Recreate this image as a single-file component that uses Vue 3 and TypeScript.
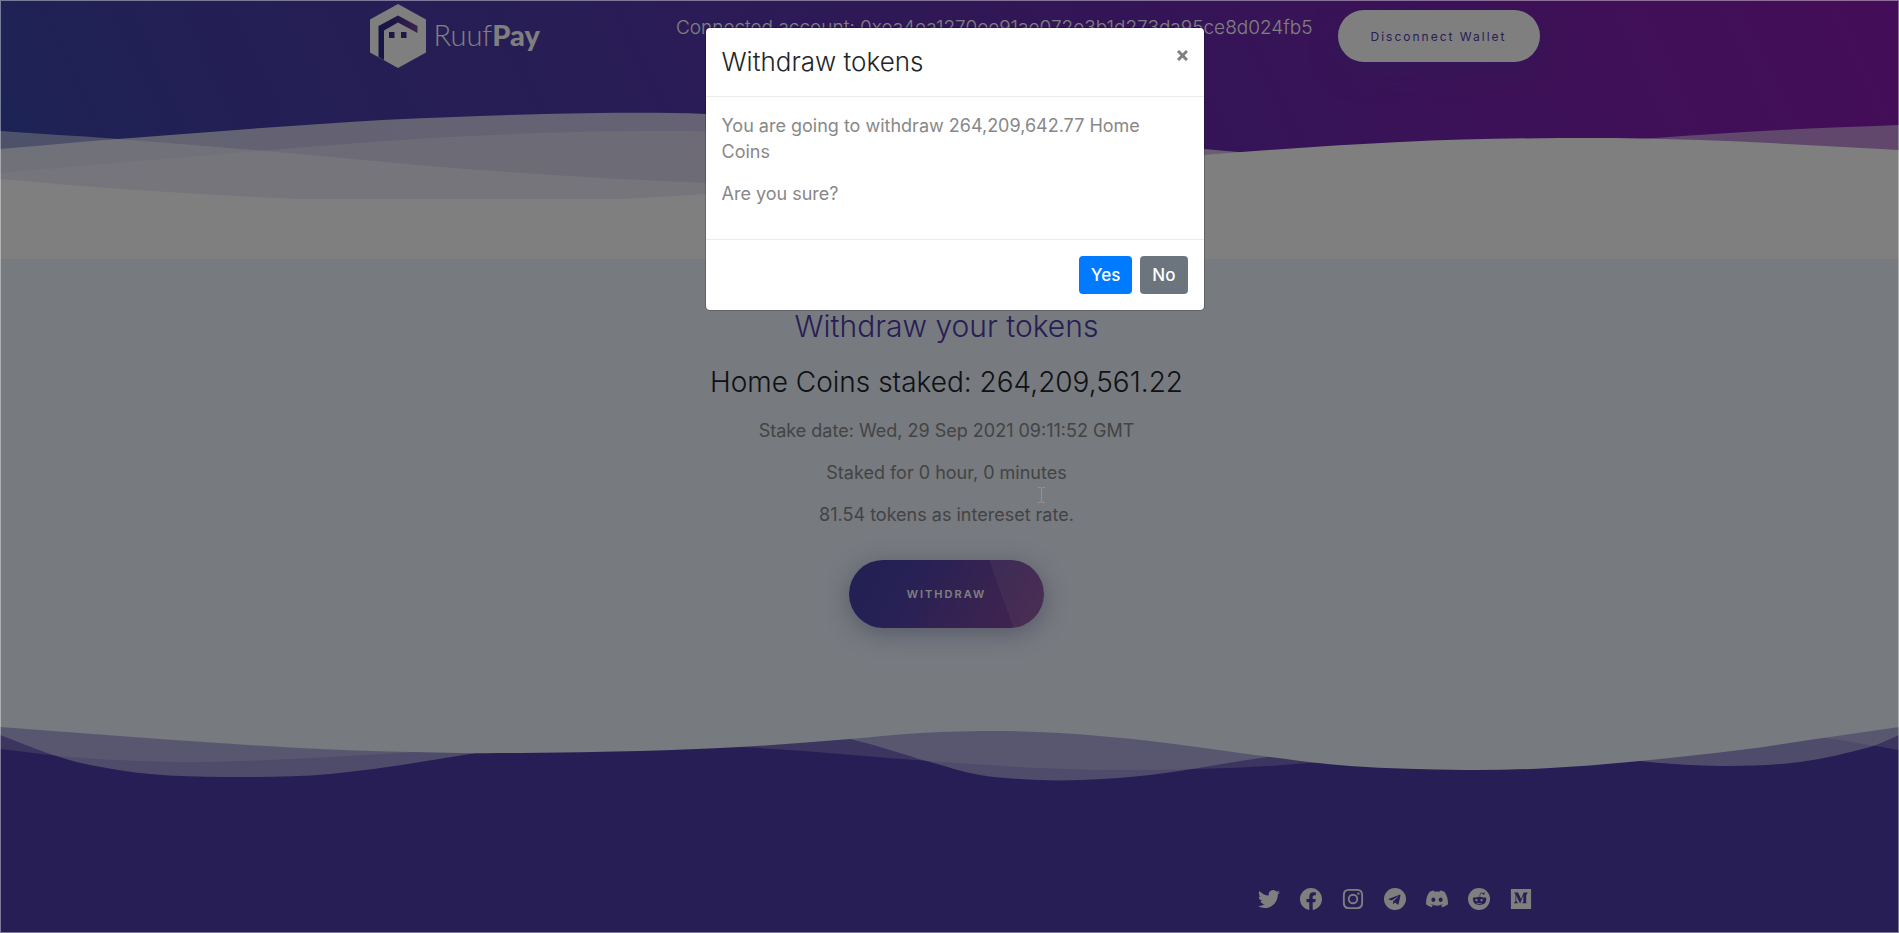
<script setup lang="ts">
type Pt = [number, number]

/** Catmull-Rom spline through the given points, as SVG path data. */
function curve(p: Pt[]): string {
  let d = `M${p[0][0]} ${p[0][1]}`
  for (let i = 0; i < p.length - 1; i++) {
    const a = p[i - 1] ?? p[i]
    const b = p[i]
    const c = p[i + 1]
    const e = p[i + 2] ?? c
    const dx = (c[0] - b[0]) / 3
    const s1 = (c[1] - a[1]) / (c[0] - a[0])
    const s2 = (e[1] - b[1]) / (e[0] - b[0])
    d += `C${(b[0] + dx).toFixed(1)} ${(b[1] + dx * s1).toFixed(1)} ${(c[0] - dx).toFixed(1)} ${(c[1] - dx * s2).toFixed(1)} ${c[0]} ${c[1]}`
  }
  return d
}
const below = (p: Pt[], y: number) => `${curve(p)}V${y}H0Z`
const above = (p: Pt[]) => `${curve(p)}V0H0Z`

const heroWaves = [
  { o: 0.7, d: below([[0, 49], [118, 39], [350, 22], [480, 16], [600, 13], [706, 14], [950, 27], [1204, 49], [1400, 66], [1899, 90]], 99) },
  { o: 0.5, d: below([[0, 31], [118, 39], [265, 51], [480, 70], [706, 83], [950, 90], [1200, 76], [1450, 53], [1655, 38], [1780, 30], [1899, 25]], 99) },
  { o: 0.3, d: below([[0, 73], [260, 51], [400, 40], [540, 33], [660, 31], [800, 34], [1204, 70], [1899, 95]], 99) },
  { o: 1, d: below([[0, 79], [120, 89], [300, 99], [460, 103], [620, 99], [706, 94], [950, 77], [1204, 55], [1400, 42], [1560, 38], [1700, 40], [1899, 50]], 99) },
]
const footWaves = [
  { o: 0.25, d: above([[0, 49], [70, 57], [140, 61], [210, 62], [310, 58], [400, 53], [560, 44], [740, 47], [930, 61], [1040, 68], [1140, 70], [1268, 66], [1400, 54], [1600, 30], [1700, 26], [1825, 38], [1899, 50]]) },
  { o: 0.5, d: above([[0, 35], [50, 54], [90, 65], [150, 74], [225, 77], [330, 74], [470, 54], [640, 24], [740, 20], [850, 39], [930, 62], [980, 75], [1040, 80], [1080, 80], [1150, 75], [1268, 57], [1400, 42], [1520, 45], [1640, 61], [1720, 66], [1800, 62], [1870, 47], [1899, 35]]) },
  { o: 1, d: above([[0, 27], [160, 39], [320, 49], [460, 53], [520, 53], [640, 51], [740, 47], [850, 39], [920, 33], [1000, 31], [1060, 33], [1150, 41], [1270, 57], [1350, 66], [1465, 70], [1550, 68], [1640, 61], [1740, 50], [1830, 37], [1899, 27]]) },
]

const stakeInfo = [
  'Stake date: Wed, 29 Sep 2021 09:11:52 GMT',
  'Staked for 0 hour, 0 minutes',
  '81.54 tokens as intereset rate.',
]

const socials = [
  { name: 'Twitter', d: 'M23.95 4.57a10 10 0 0 1-2.82.77 4.96 4.96 0 0 0 2.16-2.72c-.95.55-2 .95-3.13 1.18a4.92 4.92 0 0 0-8.38 4.48C7.69 8.1 4.07 6.13 1.64 3.16a4.82 4.82 0 0 0-.67 2.48c0 1.71.87 3.21 2.19 4.1a4.9 4.9 0 0 1-2.23-.62v.06a4.92 4.92 0 0 0 3.95 4.83 5 5 0 0 1-2.21.08 4.94 4.94 0 0 0 4.6 3.42A9.87 9.87 0 0 1 0 19.54a13.99 13.99 0 0 0 7.56 2.21c9.05 0 14-7.5 14-13.98 0-.21 0-.42-.02-.63a9.94 9.94 0 0 0 2.46-2.55z' },
  { name: 'Facebook', d: 'M24 12.07C24 5.45 18.63 0 12 0S0 5.45 0 12.07C0 18.1 4.39 23.1 10.13 24v-8.44H7.08v-3.49h3.05V9.41c0-3.02 1.79-4.69 4.53-4.69 1.31 0 2.68.24 2.68.24v2.97h-1.51c-1.49 0-1.96.93-1.96 1.89v2.25h3.33l-.53 3.49h-2.8V24C19.61 23.1 24 18.1 24 12.07z' },
  { name: 'Instagram', d: 'M12 1c-3 0-3.35 0-4.53.07C3.1 1.27 1.27 3.1 1.07 7.47 1 8.65 1 9 1 12s0 3.35.07 4.53c.2 4.36 2.03 6.2 6.4 6.4C8.65 23 9 23 12 23s3.35 0 4.53-.07c4.36-.2 6.2-2.03 6.4-6.4C23 15.35 23 15 23 12s0-3.35-.07-4.53c-.2-4.36-2.03-6.2-6.4-6.4C15.35 1 15 1 12 1zm0 2c2.94 0 3.28 0 4.44.07 3.14.14 4.35 1.37 4.5 4.5C21 8.7 21 9.06 21 12s0 3.28-.06 4.44c-.15 3.12-1.36 4.35-4.5 4.5C15.28 21 14.94 21 12 21s-3.28 0-4.44-.06c-3.14-.15-4.35-1.38-4.5-4.5C3 15.28 3 14.94 3 12s0-3.28.06-4.44c.15-3.12 1.37-4.35 4.5-4.5C8.72 3 9.06 3 12 3zm0 3.35a5.65 5.65 0 1 0 0 11.3 5.65 5.65 0 0 0 0-11.3zm0 2a3.65 3.65 0 1 1 0 7.3 3.65 3.65 0 0 1 0-7.3zm5.87-3.55a1.32 1.32 0 1 0 0 2.64 1.32 1.32 0 0 0 0-2.64z' },
  { name: 'Telegram', d: 'M12 0a12 12 0 1 0 0 24 12 12 0 0 0 0-24zm5.9 8.22-1.97 9.28c-.15.66-.54.82-1.09.51l-3-2.21-1.45 1.39c-.16.16-.3.3-.6.3l.21-3.05 5.56-5.02c.24-.22-.05-.34-.37-.12L8.32 13.6l-2.96-.92c-.64-.2-.66-.64.14-.95l11.57-4.46c.54-.2 1.01.13.83.95z' },
  { name: 'Discord', d: 'M20.32 4.37a19.8 19.8 0 0 0-4.89-1.52c-.21.38-.45.88-.61 1.28a18.3 18.3 0 0 0-5.63 0c-.17-.41-.41-.9-.62-1.28a19.7 19.7 0 0 0-4.89 1.52C.58 9.05-.26 13.6.16 18.09a19.9 19.9 0 0 0 5.99 3.03c.49-.66.92-1.36 1.28-2.1a12.9 12.9 0 0 1-1.87-.9l.37-.29a14.2 14.2 0 0 0 12.13 0l.38.3c-.6.35-1.22.65-1.88.9.36.73.79 1.43 1.28 2.09a19.8 19.8 0 0 0 6-3.03c.5-5.18-.84-9.68-3.52-13.72zM8.02 15.33c-1.18 0-2.16-1.08-2.16-2.42s.96-2.42 2.16-2.42c1.21 0 2.18 1.1 2.16 2.42 0 1.34-.96 2.42-2.16 2.42zm7.97 0c-1.18 0-2.15-1.08-2.15-2.42s.95-2.42 2.15-2.42c1.22 0 2.18 1.1 2.16 2.42 0 1.34-.94 2.42-2.16 2.42z' },
  { name: 'Reddit', d: 'M12 0a12 12 0 1 0 0 24 12 12 0 0 0 0-24zm5 4.74a1.25 1.25 0 1 1-1.24 1.3l-2.6-.54-.8 3.74c1.83.07 3.48.63 4.68 1.48a1.75 1.75 0 1 1 2.6 2.4c.03.17.04.34.04.52 0 2.69-3.13 4.87-7 4.87-3.88 0-7-2.18-7-4.87 0-.18 0-.36.04-.53a1.75 1.75 0 1 1 2.59-2.38 8.6 8.6 0 0 1 4.75-1.49l.88-4.18a.34.34 0 0 1 .38-.23l2.9.61c.2-.42.64-.7 1.13-.7zM9.25 12a1.25 1.25 0 1 0 0 2.5 1.25 1.25 0 0 0 0-2.5zm5.5 0a1.25 1.25 0 1 0 0 2.5 1.25 1.25 0 0 0 0-2.5zm-5.3 4a.33.33 0 0 0-.22.56c1.2 1.1 4.34 1.1 5.54 0a.33.33 0 0 0-.46-.47c-.95.9-3.68.9-4.63 0a.33.33 0 0 0-.23-.1z' },
  { name: 'Medium', d: 'M1 1v22h22V1zm18 5.2-1.2 1.1a.4.4 0 0 0-.13.34v8.3c0 .13.04.26.13.34L19 16.4v.3h-5.8v-.3l1.2-1.15c.12-.12.12-.15.12-.34V8.2l-3.3 8.5h-.45L6.9 8.2v5.7c0 .24.05.48.22.66l1.55 1.9v.25H4.3v-.25l1.54-1.9a.75.75 0 0 0 .2-.66V7.3a.6.6 0 0 0-.18-.47L4.5 5.2v-.26h4.25L12.05 12l2.9-7.06H19z' },
]
</script>

<template>
  <div class="page">
    <div class="hero">
      <header class="bar">
        <a class="brand" href="#">
          <svg width="56" height="64" viewBox="0 0 56 64" aria-hidden="true">
            <defs>
              <linearGradient id="roof" x1="0" x2="1" y1="0" y2="0">
                <stop offset="0" stop-color="#2c2b8c" />
                <stop offset="0.4" stop-color="#3a2c90" />
                <stop offset="1" stop-color="#7a4794" />
              </linearGradient>
            </defs>
            <path fill="#fff" d="M28 0 56 15.500V48.500L28 64 0 48.500V15.500Z" />
            <path fill="url(#roof)" d="M8.500 53V22L28 11.500 47.500 22v7L28 18.500 14 26.500V56Z" />
            <path fill="#3a2c90" d="M19 28h5.500v6H19zM31 28h5.500v6H31z" />
          </svg>
          <span class="brand-name">Ruuf<b>Pay</b></span>
        </a>
        <span class="account">Connected account: 0xea4ea1270ee91ae072e3b1d273da95ce8d024fb5</span>
        <button class="disconnect" type="button">Disconnect Wallet</button>
      </header>
      <svg class="waves" viewBox="0 0 1899 99" preserveAspectRatio="none" aria-hidden="true">
        <path v-for="w in heroWaves" :key="w.d" :d="w.d" :fill-opacity="w.o" fill="#fff" />
      </svg>
    </div>
    <div class="strip"></div>

    <main class="stake">
      <h1>Withdraw your tokens</h1>
      <h2>Home Coins staked: 264,209,561.22</h2>
      <p v-for="line in stakeInfo" :key="line">{{ line }}</p>
      <button class="withdraw" type="button">WITHDRAW</button>
    </main>

    <footer class="foot">
      <svg class="waves" viewBox="0 0 1899 99" preserveAspectRatio="none" aria-hidden="true">
        <path v-for="w in footWaves" :key="w.d" :d="w.d" :fill-opacity="w.o" fill="#eef4ff" />
      </svg>
      <nav class="socials" aria-label="Social media">
        <a v-for="s in socials" :key="s.name" href="#" :aria-label="s.name">
          <svg width="22" height="22" viewBox="0 0 24 24" aria-hidden="true"><path :d="s.d" fill="#fff" fill-rule="evenodd" /></svg>
        </a>
      </nav>
    </footer>

    <div class="backdrop">
      <svg class="caret" width="7" height="16" viewBox="0 0 7 16" aria-hidden="true">
        <path d="M0 .5h3M4 .5h3M3.500 1v14M0 15.500h3M4 15.500h3" stroke="#999284" fill="none" />
      </svg>
      <section class="modal" role="dialog" aria-modal="true" aria-labelledby="modal-title">
        <div class="modal-head">
          <h5 id="modal-title">Withdraw tokens</h5>
          <button class="close" type="button" aria-label="Close">
            <svg width="11" height="11" viewBox="0 0 11 11" aria-hidden="true"><path d="M1 1l9 9M10 1l-9 9" stroke="#808080" stroke-width="3" /></svg>
          </button>
        </div>
        <div class="modal-body">
          <p>You are going to withdraw 264,209,642.77 Home Coins</p>
          <p>Are you sure?</p>
        </div>
        <div class="modal-foot">
          <button class="btn yes" type="button">Yes</button>
          <button class="btn no" type="button">No</button>
        </div>
      </section>
    </div>
  </div>
</template>

<style>
body {
  background: #503cac;
}
</style>

<style scoped>
.page {
  position: relative;
  display: flex;
  flex-direction: column;
  min-height: 100vh;
  overflow: hidden;
  background: #eef4ff;
  font-family: Inter, "Open Sans", sans-serif;
  font-size: 18px;
  line-height: 26px;
  color: #888;
}
h1, h2, h5, p { margin: 0; font-weight: 400; }
button { font-family: inherit; border: 0; cursor: pointer; }
.hero {
  display: flex;
  flex-direction: column;
  justify-content: space-between;
  height: 199px;
  background: linear-gradient(65deg, #3947ac 0%, #463fa8 14%, #523aac 34%, #6829ae 62%, #7a23ae 78%, #8a1ab2 100%);
}
.bar {
  box-sizing: border-box;
  display: flex;
  width: 100%;
  max-width: 1180px;
  margin: 0 auto;
  padding: 4px 0 0 10px;
}
.brand {
  display: flex;
  gap: 8px;
  color: #fff;
  text-decoration: none;
}
.brand svg { display: block; }
.brand-name {
  padding-top: 13px;
  font: 300 29px/36px Lato, sans-serif;
}
.brand-name b { font-weight: 900; }
.account {
  margin-left: auto;
  padding-top: 11px;
  color: #fff;
  font-size: 19px;
  font-weight: 300;
  white-space: nowrap;
}
.disconnect {
  width: 202px;
  height: 52px;
  margin: 6px 0 0 25px;
  border-radius: 26px;
  background: #fff;
  box-shadow: 0 10px 30px rgba(80, 60, 172, 0.4);
  color: #503cac;
  font-size: 12px;
  letter-spacing: 2px;
}
.waves {
  display: block;
  width: 100%;
  height: 99px;
}
.strip { height: 60px; background: #fff; }
.stake {
  flex: 1;
  display: flex;
  flex-direction: column;
  align-items: center;
  padding: 49px 6px 0 0;
  text-align: center;
}
.stake h1 { color: #503cac; font-size: 30px; line-height: 36px; font-weight: 300; }
.stake h2 { margin: 20px 0 18px; color: #212529; font-size: 28px; line-height: 36px; font-weight: 300; }
.stake p { margin-bottom: 16px; }
.withdraw {
  width: 195px;
  height: 68px;
  margin-top: 16px;
  border-radius: 34px;
  background:
    linear-gradient(110deg, transparent 75%, rgba(255, 255, 255, 0.1) 75%),
    linear-gradient(135deg, #423fa8 0%, #4b3faa 30%, #84489a 90%);
  background:
    linear-gradient(70deg, transparent 75%, rgba(255, 255, 255, 0.1) 75%),
    linear-gradient(120deg, #443fa8 0%, #4e42aa 30%, #84489e 90%);
  box-shadow: 0 5px 25px rgba(70, 80, 140, 0.4);
  color: #fff;
  font-size: 11px;
  font-weight: 600;
  letter-spacing: 2px;
}
.foot { background: #503cac; }
.socials {
  box-sizing: border-box;
  display: flex;
  justify-content: flex-end;
  gap: 20px;
  max-width: 1178px;
  margin: 0 auto;
  padding: 89px 7px 23px 0;
}
.socials a, .socials svg { display: block; }
.backdrop {
  position: absolute;
  inset: 0;
  box-sizing: border-box;
  padding-left: 10px;
  border: 1px solid rgba(255, 255, 255, 0.4);
  background: rgba(0, 0, 0, 0.5);
}
.caret { position: absolute; left: 1037px; top: 486px; }
.modal {
  position: relative;
  box-sizing: border-box;
  width: 500px;
  max-width: 100%;
  margin: 26px auto 0;
  border: 1px solid rgba(0, 0, 0, 0.2);
  border-radius: 5px;
  background: #fff;
  background-clip: padding-box;
}
.modal-head {
  display: flex;
  justify-content: space-between;
  align-items: flex-start;
  padding: 16px;
  border-bottom: 1px solid #e9ecef;
}
.modal-head h5 { color: #212529; font-size: 26px; line-height: 36px; font-weight: 300; }
.close { padding: 6px 0; background: none; line-height: 0; }
.modal-body { padding: 16px; }
.modal-body p { margin-bottom: 16px; }
.modal-foot {
  display: flex;
  justify-content: flex-end;
  gap: 8px;
  padding: 16px;
  border-top: 1px solid #e9ecef;
}
.btn {
  height: 38px;
  padding: 0 12px;
  border-radius: 4px;
  color: #fff;
  font-size: 17px;
  font-weight: 500;
}
.yes { background: #007bff; }
.no { background: #6c757d; }
</style>
